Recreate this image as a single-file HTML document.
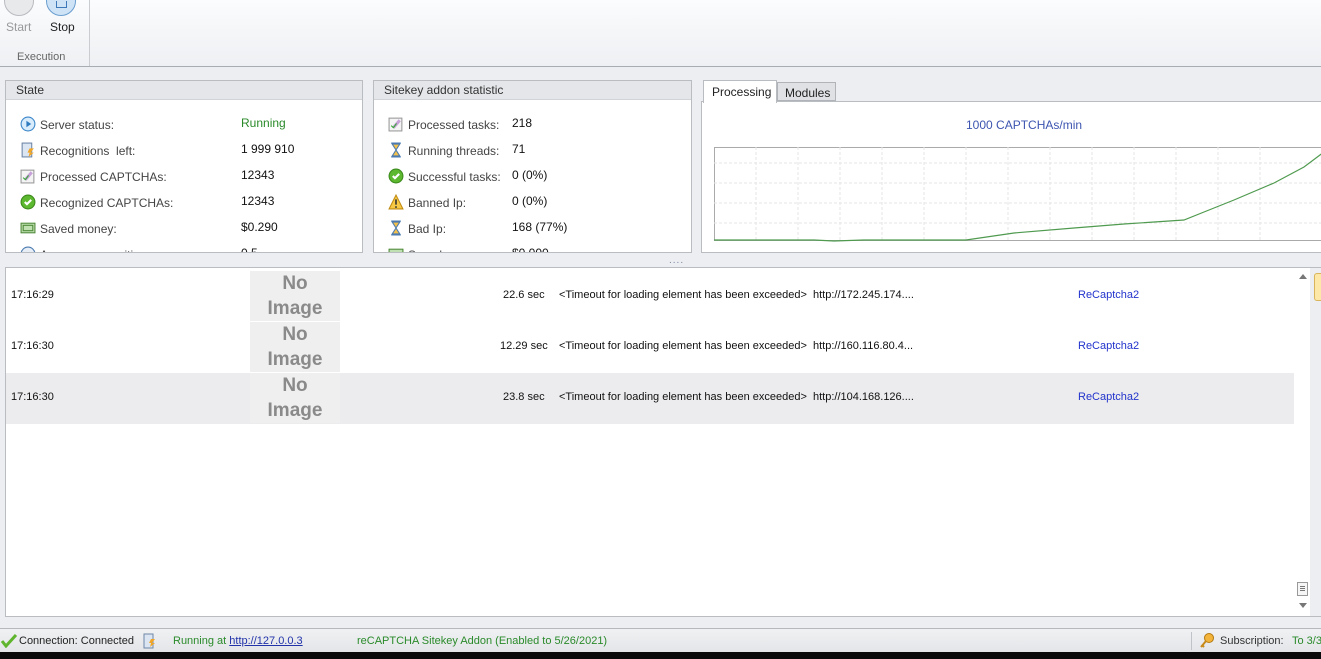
<!DOCTYPE html>
<html><head><meta charset="utf-8">
<style>
*{box-sizing:border-box;margin:0;padding:0}
body{width:1321px;height:659px;overflow:hidden;background:#eceef1;font-family:"Liberation Sans",sans-serif;font-size:12px;color:#222;position:relative}
.abs{position:absolute}
.ribbon{left:0;top:0;width:1321px;height:67px;background:linear-gradient(#fbfcfd,#eef0f3);border-bottom:1px solid #a8adb3}
.panel{background:#fff;border:1px solid #b9bdc2}
.ph{position:absolute;left:0;top:0;right:0;height:19px;background:#e4e6e9;border-bottom:1px solid #d0d3d7;padding:2px 0 0 10px;font-size:12px;color:#333}
.row{position:absolute;left:14px;height:16px;color:#444;white-space:nowrap}
.row .v{position:absolute;color:#111}
.ic{display:inline-block;width:16px;height:16px;vertical-align:-3px;margin-right:4px}
.log{left:5px;top:267px;width:1316px;height:350px;background:#fff;border:1px solid #b9bdc2}
.lr{position:absolute;left:0;width:1288px;height:51px;font-size:11px;color:#111}
.lr span{position:absolute;top:18px;white-space:nowrap}
.ni{position:absolute;left:244px;top:0;width:90px;height:50px;background:#efefef;color:#8a8a8a;font-weight:bold;font-size:19px;text-align:center;line-height:25px}
.sb{left:0;top:628px;width:1321px;height:24px;background:linear-gradient(#eff1f3,#e3e5e8);border-top:1px solid #b5b9be;font-size:11px}
.sb span{position:absolute;top:6px;white-space:nowrap}
</style></head><body>
<div class="abs ribbon">
  <div class="abs" style="left:4px;top:-14px;width:30px;height:30px;border-radius:50%;border:1px solid #b8bbbf;background:#e8e9eb"></div>
  <div class="abs" style="left:46px;top:-14px;width:30px;height:30px;border-radius:50%;border:1px solid #6a9fd0;background:#cfe3f6"><div class="abs" style="left:9px;top:14px;width:11px;height:7px;border:1px solid #3d78b8;border-top:none"></div></div>
  <div class="abs" style="left:6px;top:20px;color:#999">Start</div>
  <div class="abs" style="left:50px;top:20px;color:#222">Stop</div>
  <div class="abs" style="left:17px;top:51px;color:#666;font-size:11px">Execution</div>
  <div class="abs" style="left:89px;top:0;width:1px;height:66px;background:#c9ccd0"></div>
</div>

<div class="abs panel" style="left:5px;top:80px;width:358px;height:173px;overflow:hidden">
  <div class="ph">State</div>
  <div class="row" style="top:35px"><svg class="ic" viewBox="0 0 15 15"><circle cx="7.5" cy="7.5" r="6.5" fill="#d8ecfb" stroke="#3b86c9"/><path d="M6 4.5v6l4.5-3z" fill="#2f7bc0"/></svg>Server status:<span class="v" style="left:221px;color:#2a8a2a">Running</span></div>
  <div class="row" style="top:61px"><svg class="ic" viewBox="0 0 15 15"><rect x="2" y="1" width="9" height="13" fill="#dce6f2" stroke="#6d87a8"/><path d="M9 6l4 0-3 4h3l-5 4 1-4h-2z" fill="#f2a627"/></svg>Recognitions &nbsp;left:<span class="v" style="left:221px">1 999 910</span></div>
  <div class="row" style="top:87px"><svg class="ic" viewBox="0 0 15 15"><rect x="1" y="2" width="12" height="12" fill="#f4f4f4" stroke="#999"/><path d="M4 10l6-7 2 2-6 7z" fill="#c7a0d8"/><path d="M3 9l2 2 3-4" stroke="#3a3" fill="none"/></svg>Processed CAPTCHAs:<span class="v" style="left:221px">12343</span></div>
  <div class="row" style="top:113px"><svg class="ic" viewBox="0 0 15 15"><circle cx="7.5" cy="7.5" r="6.5" fill="#5cb82e" stroke="#3c8a1c"/><path d="M4.5 7.5l2 2 4-4" stroke="#fff" stroke-width="2" fill="none"/></svg>Recognized CAPTCHAs:<span class="v" style="left:221px">12343</span></div>
  <div class="row" style="top:139px"><svg class="ic" viewBox="0 0 15 15"><rect x="1" y="3" width="13" height="9" fill="#bfe0b0" stroke="#4f8a3a"/><rect x="3" y="5" width="9" height="5" fill="none" stroke="#4f8a3a"/></svg>Saved money:<span class="v" style="left:221px">$0.290</span></div>
  <div class="row" style="top:165px"><svg class="ic" viewBox="0 0 15 15"><circle cx="7.5" cy="7.5" r="6.5" fill="#e8eef5" stroke="#4a7ab0"/></svg>Average recognition<span class="v" style="left:221px">0.5</span></div>
</div>

<div class="abs panel" style="left:373px;top:80px;width:319px;height:173px;overflow:hidden">
  <div class="ph">Sitekey addon statistic</div>
  <div class="row" style="top:35px"><svg class="ic" viewBox="0 0 15 15"><rect x="1" y="2" width="12" height="12" fill="#f4f4f4" stroke="#999"/><path d="M4 10l6-7 2 2-6 7z" fill="#c7a0d8"/><path d="M3 9l2 2 3-4" stroke="#3a3" fill="none"/></svg>Processed tasks:<span class="v" style="left:124px">218</span></div>
  <div class="row" style="top:61px"><svg class="ic" viewBox="0 0 15 15"><path d="M3 1h9M3 14h9M4 2h7l-3.5 5.5L11 13H4l3.5-5.5z" stroke="#4a7ab0" fill="#f3c14a"/></svg>Running threads:<span class="v" style="left:124px">71</span></div>
  <div class="row" style="top:87px"><svg class="ic" viewBox="0 0 15 15"><circle cx="7.5" cy="7.5" r="6.5" fill="#5cb82e" stroke="#3c8a1c"/><path d="M4.5 7.5l2 2 4-4" stroke="#fff" stroke-width="2" fill="none"/></svg>Successful tasks:<span class="v" style="left:124px">0 (0%)</span></div>
  <div class="row" style="top:113px"><svg class="ic" viewBox="0 0 15 15"><path d="M7.5 1L14 14H1z" fill="#f6c844" stroke="#c08a10"/><path d="M7.5 5v5M7.5 11.5v1.5" stroke="#333" stroke-width="1.5"/></svg>Banned Ip:<span class="v" style="left:124px">0 (0%)</span></div>
  <div class="row" style="top:139px"><svg class="ic" viewBox="0 0 15 15"><path d="M3 1h9M3 14h9M4 2h7l-3.5 5.5L11 13H4l3.5-5.5z" stroke="#4a7ab0" fill="#f3c14a"/></svg>Bad Ip:<span class="v" style="left:124px">168 (77%)</span></div>
  <div class="row" style="top:165px"><svg class="ic" viewBox="0 0 15 15"><rect x="1" y="3" width="13" height="9" fill="#bfe0b0" stroke="#4f8a3a"/></svg>Saved money:<span class="v" style="left:124px">$0.000</span></div>
</div>

<div class="abs" style="left:703px;top:80px;width:74px;height:23px;background:#fff;border:1px solid #b9bdc2;border-bottom:none;z-index:2;padding:4px 0 0 8px">Processing</div>
<div class="abs" style="left:777px;top:82px;width:59px;height:19px;background:#dfe1e4;border:1px solid #b0b4b9;padding:3px 0 0 7px">Modules</div>
<div class="abs panel" style="left:701px;top:101px;width:625px;height:152px">
  <div class="abs" style="left:264px;top:16px;color:#3d55b0">1000 CAPTCHAs/min</div>
  <svg class="abs" style="left:12px;top:45px" width="610" height="96" viewBox="0 0 610 96">
    <rect x="0.5" y="0.5" width="620" height="93" fill="#fff" stroke="#aaa"/>
    <g stroke="#e6e6e6" stroke-dasharray="3,2">
      <line x1="0" y1="16" x2="610" y2="16"/><line x1="0" y1="36" x2="610" y2="36"/><line x1="0" y1="56" x2="610" y2="56"/><line x1="0" y1="76" x2="610" y2="76"/>
      <line x1="42" y1="0" x2="42" y2="93"/><line x1="84" y1="0" x2="84" y2="93"/><line x1="126" y1="0" x2="126" y2="93"/><line x1="168" y1="0" x2="168" y2="93"/><line x1="210" y1="0" x2="210" y2="93"/><line x1="252" y1="0" x2="252" y2="93"/><line x1="294" y1="0" x2="294" y2="93"/><line x1="336" y1="0" x2="336" y2="93"/><line x1="378" y1="0" x2="378" y2="93"/><line x1="420" y1="0" x2="420" y2="93"/><line x1="462" y1="0" x2="462" y2="93"/><line x1="504" y1="0" x2="504" y2="93"/><line x1="546" y1="0" x2="546" y2="93"/>
    </g>
    <polyline fill="none" stroke="#4f9a4f" stroke-width="1.2" points="0,93 100,93 120,94 150,93 252,93 300,86 360,81 410,77 470,73 490,65 520,53 560,36 590,20 610,5"/>
  </svg>
</div>
<div class="abs" style="left:669px;top:255px;color:#7a86a0;font-size:10px;letter-spacing:1px">....</div>

<div class="abs log">
  <div class="lr" style="top:3px"><span style="left:5px">17:16:29</span><div class="ni">No<br>Image</div><span style="left:497px">22.6 sec</span><span style="left:553px">&lt;Timeout for loading element has been exceeded&gt;&nbsp; http://172.245.174....</span><span style="left:1072px;color:#2233cc">ReCaptcha2</span></div>
  <div class="lr" style="top:54px"><span style="left:5px">17:16:30</span><div class="ni">No<br>Image</div><span style="left:494px">12.29 sec</span><span style="left:553px">&lt;Timeout for loading element has been exceeded&gt;&nbsp; http://160.116.80.4...</span><span style="left:1072px;color:#2233cc">ReCaptcha2</span></div>
  <div class="lr" style="top:105px;background:#ececee"><span style="left:5px">17:16:30</span><div class="ni">No<br>Image</div><span style="left:497px">23.8 sec</span><span style="left:553px">&lt;Timeout for loading element has been exceeded&gt;&nbsp; http://104.168.126....</span><span style="left:1072px;color:#2233cc">ReCaptcha2</span></div>
  <div class="abs" style="left:1288px;top:0;width:16px;height:348px;background:#fff"></div>
  <div class="abs" style="left:1293px;top:6px;width:0;height:0;border:4px solid transparent;border-bottom:5px solid #777;border-top:none"></div>
  <div class="abs" style="left:1291px;top:314px;width:11px;height:14px;border:1px solid #999;background:#f6f6f6"><div class="abs" style="left:2px;top:3px;width:5px;height:5px;border-top:1px solid #777;border-bottom:1px solid #777"></div><div class="abs" style="left:2px;top:5px;width:5px;height:1px;background:#777"></div></div>
  <div class="abs" style="left:1293px;top:335px;width:0;height:0;border:4px solid transparent;border-top:5px solid #777;border-bottom:none"></div>
  <div class="abs" style="left:1304px;top:0;width:12px;height:348px;background:#eceef1"></div>
  <div class="abs" style="left:1308px;top:5px;width:10px;height:28px;background:#fde8a8;border:1px solid #d9b45a;border-radius:3px"></div>
</div>

<div class="abs sb">
  <svg class="abs" style="left:1px;top:5px" width="16" height="14" viewBox="0 0 16 14"><path d="M1 7l4 5 10-11" stroke="#5fb52e" stroke-width="3" fill="none"/></svg>
  <span style="left:19px;color:#222">Connection: Connected</span>
  <svg class="abs" style="left:143px;top:4px" width="14" height="16" viewBox="0 0 14 16"><rect x="1" y="1" width="9" height="14" fill="#dce6f2" stroke="#6d87a8"/><path d="M8 6h4l-3 4h3l-5 4 1-4H6z" fill="#f2a627"/></svg>
  <span style="left:173px;color:#2a8a2a">Running at <u style="color:#2233aa">http://127.0.0.3</u></span>
  <span style="left:357px;color:#2a8a2a">reCAPTCHA Sitekey Addon (Enabled to 5/26/2021)</span>
  <div class="abs" style="left:1191px;top:3px;width:1px;height:18px;background:#c0c3c7"></div>
  <svg class="abs" style="left:1199px;top:3px" width="16" height="17" viewBox="0 0 16 17"><circle cx="10" cy="6" r="4.5" fill="#f2b43a" stroke="#b57a10"/><path d="M7 9l-5 6M3 13l2 2" stroke="#c78a1a" stroke-width="2"/></svg>
  <span style="left:1220px;color:#333">Subscription:</span>
  <span style="left:1292px;color:#2a8a2a">To 3/31</span>
</div>
<div class="abs" style="left:0;top:652px;width:1321px;height:7px;background:#0a0a0a"></div>
</body></html>
